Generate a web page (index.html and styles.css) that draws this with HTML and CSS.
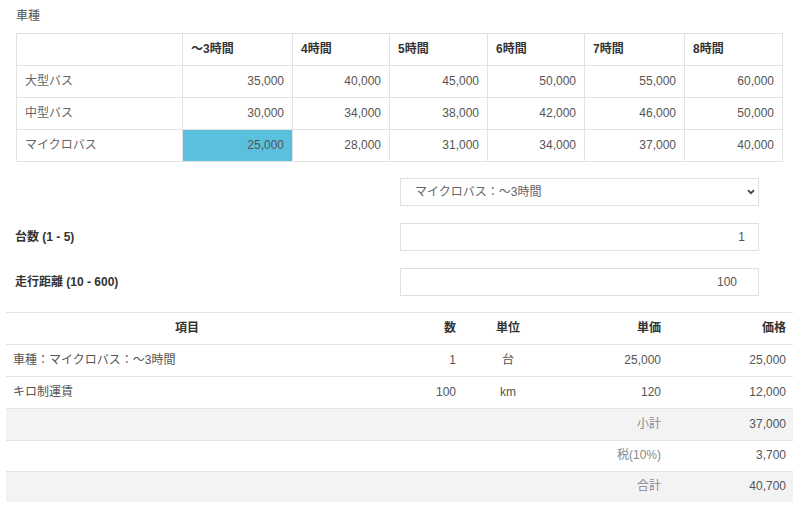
FILE: index.html
```html
<!DOCTYPE html>
<html lang="ja">
<head>
<meta charset="utf-8">
<title>料金計算</title>
<link rel="stylesheet" href="styles.css">
</head>
<body>
<div class="page">
  <div class="top">
    <div class="section-label">車種</div>
    <table class="rates">
      <colgroup>
        <col class="c-name"><col class="c-h3"><col class="c-h4"><col class="c-h5"><col class="c-h6"><col class="c-h7"><col class="c-h8">
      </colgroup>
      <thead>
        <tr><th></th><th>～3時間</th><th>4時間</th><th>5時間</th><th>6時間</th><th>7時間</th><th>8時間</th></tr>
      </thead>
      <tbody>
        <tr><td class="name">大型バス</td><td>35,000</td><td>40,000</td><td>45,000</td><td>50,000</td><td>55,000</td><td>60,000</td></tr>
        <tr><td class="name">中型バス</td><td>30,000</td><td>34,000</td><td>38,000</td><td>42,000</td><td>46,000</td><td>50,000</td></tr>
        <tr><td class="name">マイクロバス</td><td class="selected">25,000</td><td>28,000</td><td>31,000</td><td>34,000</td><td>37,000</td><td>40,000</td></tr>
      </tbody>
    </table>
  </div>

  <div class="form">
    <div class="form-row">
      <div class="form-label"></div>
      <div class="control select-wrap">
        <select class="field select">
          <option>マイクロバス：～3時間</option>
        </select>
        <svg class="chevron" width="8" height="6" viewBox="0 0 8 6"><path d="M1 1.2 L4 4.2 L7 1.2" fill="none" stroke="#444" stroke-width="1.8"/></svg>
      </div>
    </div>
    <div class="form-row">
      <label class="form-label">台数 (1 - 5)</label>
      <div class="control"><input class="field num num-count" type="text" value="1"></div>
    </div>
    <div class="form-row">
      <label class="form-label">走行距離 (10 - 600)</label>
      <div class="control"><input class="field num num-dist" type="text" value="100"></div>
    </div>
  </div>

  <table class="quote">
    <colgroup>
      <col class="q-item"><col class="q-qty"><col class="q-unit"><col class="q-price"><col class="q-total">
    </colgroup>
    <thead>
      <tr><th class="center">項目</th><th class="right">数</th><th class="center">単位</th><th class="right">単価</th><th class="right">価格</th></tr>
    </thead>
    <tbody>
      <tr><td>車種：マイクロバス：～3時間</td><td class="right">1</td><td class="center">台</td><td class="right">25,000</td><td class="right">25,000</td></tr>
      <tr><td>キロ制運賃</td><td class="right">100</td><td class="center">km</td><td class="right">120</td><td class="right">12,000</td></tr>
      <tr class="shade"><td></td><td></td><td></td><td class="right sum-label">小計</td><td class="right">37,000</td></tr>
      <tr><td></td><td></td><td></td><td class="right sum-label">税(10%)</td><td class="right">3,700</td></tr>
      <tr class="shade"><td></td><td></td><td></td><td class="right sum-label">合計</td><td class="right">40,700</td></tr>
    </tbody>
  </table>
</div>
</body>
</html>
```

FILE: styles.css
```css
html, body {
  margin: 0;
  padding: 0;
  background: #fff;
}

body {
  font-family: "Liberation Sans", "Noto Sans CJK JP", sans-serif;
  font-size: 12px;
  line-height: 17px;
  color: #555;
}

.page {
  width: 800px;
  padding: 0 7px 0 6px;
  box-sizing: border-box;
}

.top {
  padding: 8px 0 0 10px;
}

.section-label {
  color: #555;
  margin-bottom: 8px;
}

/* rates table */
.rates {
  border-collapse: collapse;
  table-layout: fixed;
  width: 767px;
}

.rates .c-name { width: 166px; }
.rates .c-h3 { width: 110px; }
.rates .c-h4 { width: 97px; }
.rates .c-h5 { width: 98px; }
.rates .c-h6 { width: 97px; }
.rates .c-h7 { width: 100px; }
.rates .c-h8 { width: 98px; }

.rates th,
.rates td {
  border: 1px solid #e3e3e3;
  padding: 7px 8px;
  height: 17px;
}

.rates th {
  text-align: left;
  font-weight: bold;
  color: #333;
}

.rates td {
  text-align: right;
  color: #555;
}

.rates td.name {
  text-align: left;
  color: #666;
}

.rates td.selected {
  background: #5bc0de;
}

/* form */
.form {
  margin-top: 16px;
  display: flex;
  flex-direction: column;
  gap: 17px;
}

.form-row {
  display: flex;
  align-items: center;
  height: 28px;
}

.form-label {
  width: 394px;
  padding-left: 9px;
  box-sizing: border-box;
  font-weight: bold;
  color: #333;
}

.control {
  width: 359px;
  height: 28px;
  position: relative;
}

.field {
  display: block;
  width: 100%;
  height: 28px;
  box-sizing: border-box;
  border: 1px solid #e0e0e0;
  border-radius: 0;
  background: #fff;
  font-family: "Liberation Sans", "Noto Sans CJK JP", sans-serif;
  font-size: 12px;
  color: #555;
  margin: 0;
  outline: none;
}

.select {
  -webkit-appearance: none;
  appearance: none;
  padding: 0 24px 0 14px;
  color: #666;
}

.chevron {
  position: absolute;
  right: 4px;
  top: 11px;
  pointer-events: none;
}

.num {
  text-align: right;
}

.num-count {
  padding: 0 13px 0 8px;
}

.num-dist {
  padding: 0 21px 0 8px;
}

/* quote table */
.quote {
  margin-top: 16px;
  border-collapse: collapse;
  table-layout: fixed;
  width: 787px;
}

.quote .q-item { width: 362px; }
.quote .q-qty { width: 95px; }
.quote .q-unit { width: 90px; }
.quote .q-price { width: 115px; }
.quote .q-total { width: 125px; }

.quote th,
.quote td {
  border-top: 1px solid #e3e3e3;
  padding: 7px 7px 7px 7px;
  height: 17px;
}

.quote thead th {
  border-top: 1px solid #e3e3e3;
  border-bottom: 1px solid #e3e3e3;
  font-weight: bold;
  color: #333;
}

.quote td {
  color: #555;
}

.quote tbody tr:first-child td {
  border-top: none;
}

.quote tr.shade td {
  background: #f3f3f3;
}

.quote td.sum-label {
  color: #888;
}

.quote tbody tr:last-child td,
.quote tbody tr:nth-child(4) td {
  padding-top: 6px;
}

.center { text-align: center; }
.right { text-align: right; }
```
